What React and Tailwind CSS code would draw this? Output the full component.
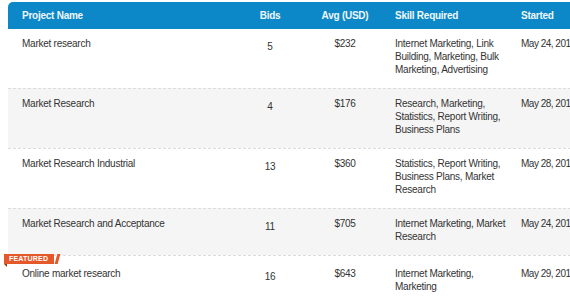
import React from 'react';

const projects = [
    { name: 'Market research', bids: 5, avg: '$232', skills: 'Internet Marketing, Link Building, Marketing, Bulk Marketing, Advertising', started: 'May 24, 2012' },
    { name: 'Market Research', bids: 4, avg: '$176', skills: 'Research, Marketing, Statistics, Report Writing, Business Plans', started: 'May 28, 2012' },
    { name: 'Market Research Industrial', bids: 13, avg: '$360', skills: 'Statistics, Report Writing, Business Plans, Market Research', started: 'May 28, 2012' },
    { name: 'Market Research and Acceptance', bids: 11, avg: '$705', skills: 'Internet Marketing, Market Research', started: 'May 24, 2012' },
    { name: 'Online market research', bids: 16, avg: '$643', skills: 'Internet Marketing, Marketing', started: 'May 29, 2012', featured: true },
];

const cols = 'grid grid-cols-[237px_50px_100px_126px_100px]';

const FeaturedBadge = () => (
    <div className="absolute left-[-4px] top-[-2px] flex items-start">
        <div className="relative">
            <div className="h-[10px] bg-[#e5582a] pl-[5px] pr-[6px] text-[7px] font-bold leading-[10px] tracking-[0.2px] text-white">
                FEATURED
            </div>
            {/* fold */}
            <div className="h-0 w-0 border-l-[3px] border-t-[3px] border-l-transparent border-t-[#9c3413]" />
        </div>
        <div className="ml-[2px] h-[10px] w-[3px] skew-x-[-15deg] bg-[#e5582a]" />
    </div>
);

const App = () => {
    return (
        <div className="h-[296px] w-[570px] overflow-hidden bg-white pl-[8px] pt-[2px] font-['Liberation_Sans',Arial,sans-serif] text-[10px] text-[#333] tracking-[-0.25px]">
            <div className="w-[613px]">
                <div className={`${cols} h-[27px] items-center rounded-tl-[5px] bg-[#0c87c7] font-bold text-[#eef7fc]`}>
                    <div className="pl-[14px]">Project Name</div>
                    <div className="text-center">Bids</div>
                    <div className="text-center">Avg (USD)</div>
                    <div>Skill Required</div>
                    <div>Started</div>
                </div>

                {projects.map((p, i) => (
                    <div
                        key={i}
                        className={`${cols} relative leading-[13px] ${i > 0 ? 'border-t border-dashed border-[#dcdcdc]' : ''} ${i % 2 === 1 ? 'bg-[#f5f5f5]' : 'bg-white'} ${p.featured ? 'pt-[11px]' : 'pt-[8px]'} pb-[12px]`}
                    >
                        {p.featured && <FeaturedBadge />}
                        <div className="pl-[14px]">{p.name}</div>
                        <div className="pt-[3px] text-center">{p.bids}</div>
                        <div className="text-center">{p.avg}</div>
                        <div className="pr-[6px]">{p.skills}</div>
                        <div className="whitespace-nowrap tracking-[-0.5px]">{p.started}</div>
                    </div>
                ))}
            </div>
        </div>
    );
};

export default App;
